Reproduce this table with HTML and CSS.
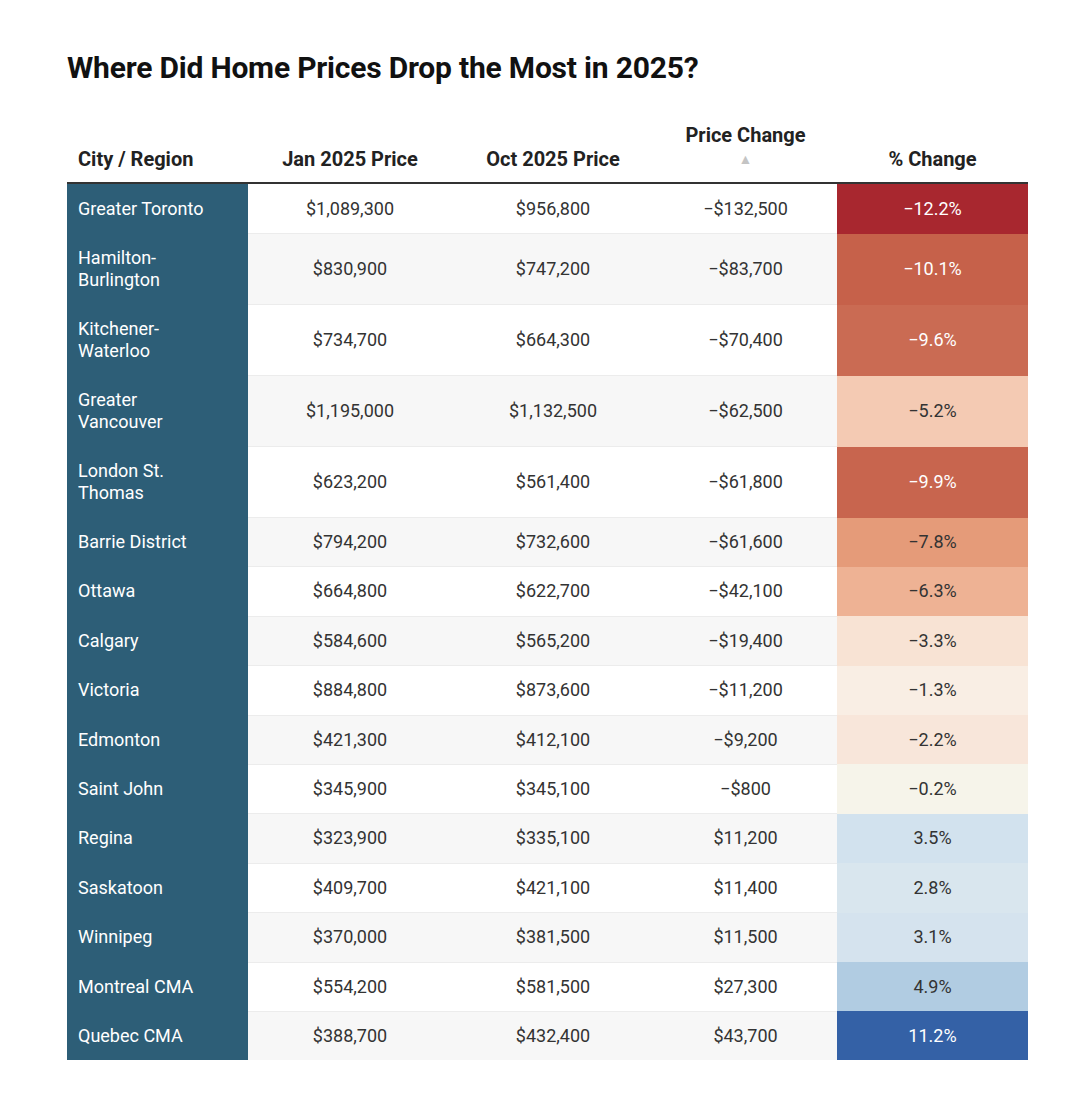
FILE: index.html
```html
<!DOCTYPE html>
<html lang="en">
<head>
<meta charset="utf-8">
<title>Where Did Home Prices Drop the Most in 2025?</title>
<link rel="stylesheet" href="styles.css">
</head>
<body>
<main class="page">
  <h1 class="title">Where Did Home Prices Drop the Most in 2025?</h1>
  <table class="data">
    <colgroup>
      <col class="c-city"><col class="c-jan"><col class="c-oct"><col class="c-chg"><col class="c-pct">
    </colgroup>
    <thead>
      <tr>
        <th class="h-city">City / Region</th>
        <th>Jan 2025 Price</th>
        <th>Oct 2025 Price</th>
        <th class="h-sort">Price Change<span class="sort">▲</span></th>
        <th>% Change</th>
      </tr>
    </thead>
    <tbody>
      <tr><td class="city">Greater Toronto</td><td>$1,089,300</td><td>$956,800</td><td>−$132,500</td><td class="pct light" style="background:#a8272f">−12.2%</td></tr>
      <tr><td class="city">Hamilton-<br>Burlington</td><td>$830,900</td><td>$747,200</td><td>−$83,700</td><td class="pct light" style="background:#c6614a">−10.1%</td></tr>
      <tr><td class="city">Kitchener-<br>Waterloo</td><td>$734,700</td><td>$664,300</td><td>−$70,400</td><td class="pct light" style="background:#ca6b53">−9.6%</td></tr>
      <tr><td class="city">Greater<br>Vancouver</td><td>$1,195,000</td><td>$1,132,500</td><td>−$62,500</td><td class="pct" style="background:#f4cab3">−5.2%</td></tr>
      <tr><td class="city">London St.<br>Thomas</td><td>$623,200</td><td>$561,400</td><td>−$61,800</td><td class="pct light" style="background:#c8654e">−9.9%</td></tr>
      <tr><td class="city">Barrie District</td><td>$794,200</td><td>$732,600</td><td>−$61,600</td><td class="pct" style="background:#e59b79">−7.8%</td></tr>
      <tr><td class="city">Ottawa</td><td>$664,800</td><td>$622,700</td><td>−$42,100</td><td class="pct" style="background:#eeb294">−6.3%</td></tr>
      <tr><td class="city">Calgary</td><td>$584,600</td><td>$565,200</td><td>−$19,400</td><td class="pct" style="background:#f8e3d4">−3.3%</td></tr>
      <tr><td class="city">Victoria</td><td>$884,800</td><td>$873,600</td><td>−$11,200</td><td class="pct" style="background:#f9eee4">−1.3%</td></tr>
      <tr><td class="city">Edmonton</td><td>$421,300</td><td>$412,100</td><td>−$9,200</td><td class="pct" style="background:#f8e6da">−2.2%</td></tr>
      <tr><td class="city">Saint John</td><td>$345,900</td><td>$345,100</td><td>−$800</td><td class="pct" style="background:#f6f4ea">−0.2%</td></tr>
      <tr><td class="city">Regina</td><td>$323,900</td><td>$335,100</td><td>$11,200</td><td class="pct" style="background:#d2e2ee">3.5%</td></tr>
      <tr><td class="city">Saskatoon</td><td>$409,700</td><td>$421,100</td><td>$11,400</td><td class="pct" style="background:#d9e6ee">2.8%</td></tr>
      <tr><td class="city">Winnipeg</td><td>$370,000</td><td>$381,500</td><td>$11,500</td><td class="pct" style="background:#d5e3ee">3.1%</td></tr>
      <tr><td class="city">Montreal CMA</td><td>$554,200</td><td>$581,500</td><td>$27,300</td><td class="pct" style="background:#b1cce2">4.9%</td></tr>
      <tr><td class="city">Quebec CMA</td><td>$388,700</td><td>$432,400</td><td>$43,700</td><td class="pct light" style="background:#3461a6">11.2%</td></tr>
    </tbody>
  </table>
</main>
</body>
</html>
```

FILE: styles.css
```css
html, body {
  margin: 0;
  padding: 0;
  background: #ffffff;
}

body {
  font-family: Roboto, "Liberation Sans", Arial, sans-serif;
  color: #333333;
}

.page {
  padding: 50px 0 0 67px;
}

.title {
  margin: 0;
  font-size: 30px;
  line-height: 36px;
  font-weight: 700;
  color: #111111;
  letter-spacing: -0.2px;
}

.data {
  margin-top: 37px;
  border-collapse: collapse;
  table-layout: fixed;
  width: 961px;
  font-size: 18px;
}

.c-city { width: 181px; }
.c-jan { width: 204px; }
.c-oct { width: 202px; }
.c-chg { width: 183px; }
.c-pct { width: 191px; }

.data th {
  font-weight: 700;
  font-size: 20px;
  line-height: 24px;
  color: #222222;
  text-align: center;
  vertical-align: bottom;
  padding: 0 0 11px;
  border-bottom: 2px solid #333333;
}

.data th.h-city {
  text-align: left;
  padding-left: 11px;
}

.sort {
  display: block;
  font-size: 14px;
  line-height: 24px;
  color: #c4c4c4;
  font-weight: 400;
}

.data td {
  padding: 13px 0;
  font-size: 18px;
  line-height: 22px;
  text-align: center;
  vertical-align: middle;
  border-bottom: 1px solid #ececec;
  color: #333333;
}

.data tbody tr:first-child td {
  padding-top: 14px;
}

.data tbody tr:nth-child(n+6) td {
  padding-bottom: 13.4px;
}

.data tbody tr:nth-child(even) td {
  background: #f7f7f7;
}

.data tbody tr:last-child td {
  border-bottom: none;
}

.data td.city,
.data tbody tr:nth-child(even) td.city {
  background: #2d5e77;
  color: #ffffff;
  text-align: left;
  padding-left: 11px;
  border-bottom-color: #2d5e77;
}

.data td.pct {
  border-bottom: none;
  color: #333333;
}

.data td.pct.light {
  color: #ffffff;
}
```
